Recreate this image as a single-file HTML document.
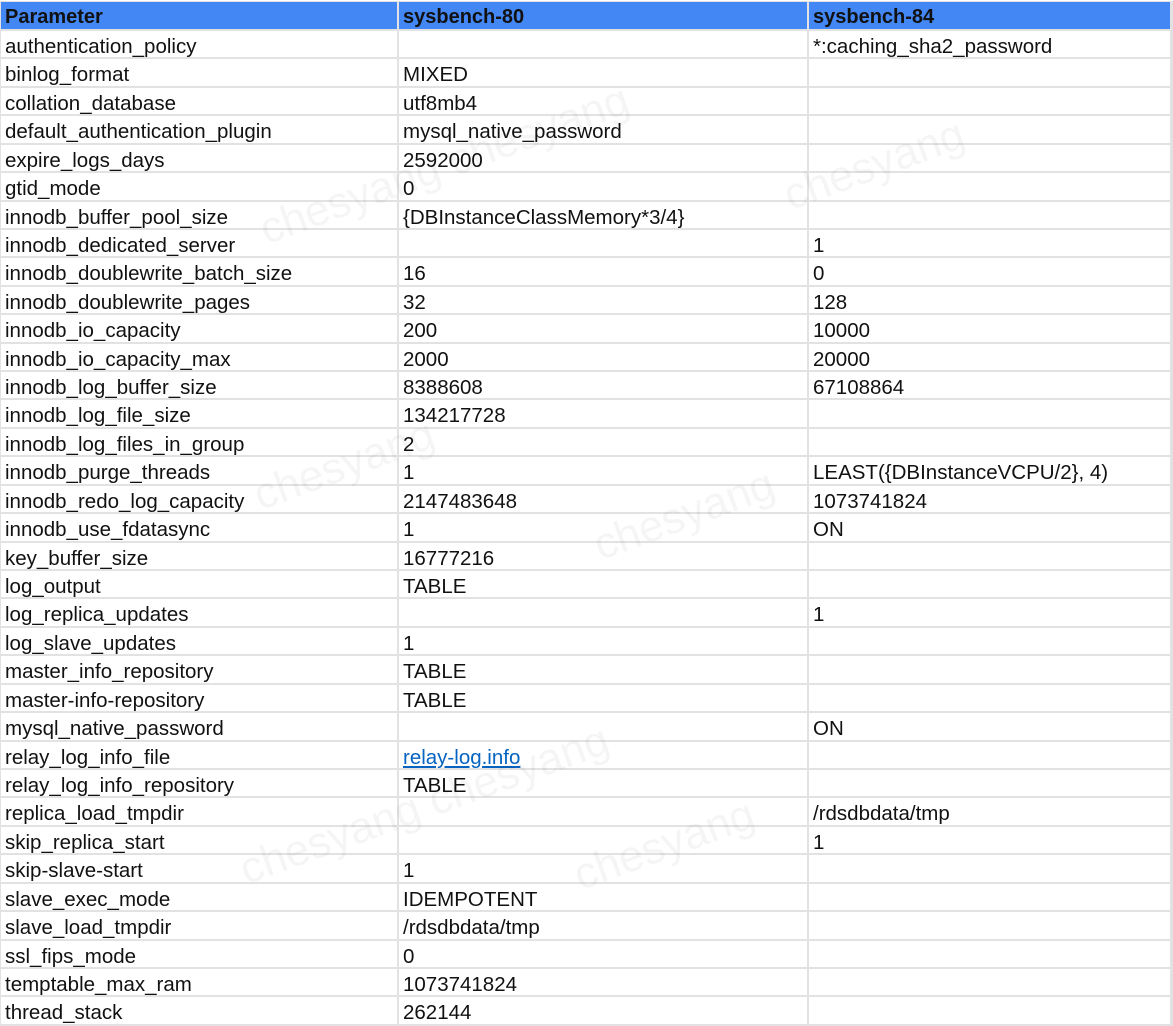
<!DOCTYPE html>
<html><head><meta charset="utf-8"><style>
html,body{margin:0;padding:0;}
body{width:1173px;height:1026px;background:#fff;position:relative;overflow:hidden;font-family:"Liberation Sans","Noto Sans CJK SC",sans-serif;}
.g{position:absolute;left:0;top:1px;width:1171px;display:grid;grid-template-columns:396px 408px 361px;grid-template-rows:27px repeat(35,26.43px);gap:2px;background:#e2e2e2;padding:1px 2px 2px 1px;}
.g div{background:#fff;font-size:20.5px;line-height:26px;padding-top:3px;box-sizing:border-box;padding-left:4px;white-space:nowrap;overflow:hidden;color:#111;}
.g .h{background:#4287f3;font-weight:bold;color:#111;font-size:20px;padding-top:2px;}
a{color:#0563c1;text-decoration:underline;}
.w{position:absolute;font-size:44px;color:rgba(0,0,0,0.04);transform:rotate(-20deg);white-space:nowrap;pointer-events:none;}
</style></head><body>
<div class="g">
<div class="h">Parameter</div><div class="h">sysbench-80</div><div class="h">sysbench-84</div>
<div>authentication_policy</div><div></div><div>*:caching_sha2_password</div>
<div>binlog_format</div><div>MIXED</div><div></div>
<div>collation_database</div><div>utf8mb4</div><div></div>
<div>default_authentication_plugin</div><div>mysql_native_password</div><div></div>
<div>expire_logs_days</div><div>2592000</div><div></div>
<div>gtid_mode</div><div>0</div><div></div>
<div>innodb_buffer_pool_size</div><div>{DBInstanceClassMemory*3/4}</div><div></div>
<div>innodb_dedicated_server</div><div></div><div>1</div>
<div>innodb_doublewrite_batch_size</div><div>16</div><div>0</div>
<div>innodb_doublewrite_pages</div><div>32</div><div>128</div>
<div>innodb_io_capacity</div><div>200</div><div>10000</div>
<div>innodb_io_capacity_max</div><div>2000</div><div>20000</div>
<div>innodb_log_buffer_size</div><div>8388608</div><div>67108864</div>
<div>innodb_log_file_size</div><div>134217728</div><div></div>
<div>innodb_log_files_in_group</div><div>2</div><div></div>
<div>innodb_purge_threads</div><div>1</div><div>LEAST({DBInstanceVCPU/2}, 4)</div>
<div>innodb_redo_log_capacity</div><div>2147483648</div><div>1073741824</div>
<div>innodb_use_fdatasync</div><div>1</div><div>ON</div>
<div>key_buffer_size</div><div>16777216</div><div></div>
<div>log_output</div><div>TABLE</div><div></div>
<div>log_replica_updates</div><div></div><div>1</div>
<div>log_slave_updates</div><div>1</div><div></div>
<div>master_info_repository</div><div>TABLE</div><div></div>
<div>master-info-repository</div><div>TABLE</div><div></div>
<div>mysql_native_password</div><div></div><div>ON</div>
<div>relay_log_info_file</div><div><a>relay-log.info</a></div><div></div>
<div>relay_log_info_repository</div><div>TABLE</div><div></div>
<div>replica_load_tmpdir</div><div></div><div>/rdsdbdata/tmp</div>
<div>skip_replica_start</div><div></div><div>1</div>
<div>skip-slave-start</div><div>1</div><div></div>
<div>slave_exec_mode</div><div>IDEMPOTENT</div><div></div>
<div>slave_load_tmpdir</div><div>/rdsdbdata/tmp</div><div></div>
<div>ssl_fips_mode</div><div>0</div><div></div>
<div>temptable_max_ram</div><div>1073741824</div><div></div>
<div>thread_stack</div><div>262144</div><div></div>
</div>
<div class="w" style="left:250px;top:140px">chesyang chesyang</div>
<div class="w" style="left:780px;top:140px">chesyang</div>
<div class="w" style="left:250px;top:440px">chesyang</div>
<div class="w" style="left:590px;top:490px">chesyang</div>
<div class="w" style="left:230px;top:780px">chesyang chesyang</div>
<div class="w" style="left:570px;top:820px">chesyang</div>
</body></html>
